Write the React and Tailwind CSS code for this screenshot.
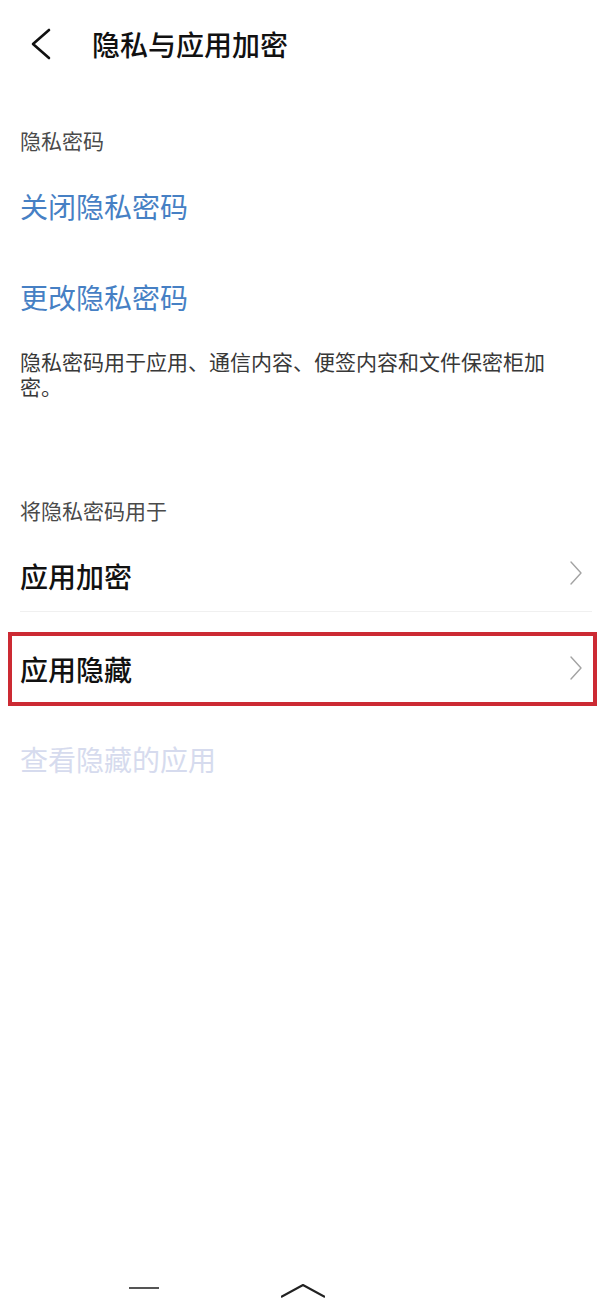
import React from "react";

const font = { fontFamily: '"Noto Sans CJK SC", "Noto Sans", sans-serif' };

const Chevron = () => (
  <svg width="14" height="24" viewBox="0 0 14 24" fill="none" className="shrink-0">
    <polyline points="2,1 12,12 2,23" stroke="#a3a3a3" strokeWidth="1.4" strokeLinejoin="round" strokeLinecap="round" />
  </svg>
);

export default function App() {
  return (
    <div className="min-h-[1298px] w-[612px] bg-white flex flex-col font-['Noto_Sans_CJK_SC',sans-serif]" style={font}>
      {/* header */}
      <div className="h-[88px] flex items-center">
        <svg width="22" height="32" viewBox="0 0 22 32" fill="none" className="ml-[30px]">
          <polyline points="19,2 3,16 19,30" stroke="#111" strokeWidth="2.6" strokeLinecap="round" strokeLinejoin="round" />
        </svg>
        <h1 className="ml-[40px] text-[28px] leading-[40px] font-medium text-[#111]">隐私与应用加密</h1>
      </div>

      {/* password section */}
      <div className="mt-[33px] h-[40px] flex items-center px-[20px] text-[21px] text-[#4a4a4a]">隐私密码</div>
      <div className="h-[90px] flex items-center px-[20px] text-[28px] text-[#4680c4]">关闭隐私密码</div>
      <div className="h-[92px] flex items-center px-[20px] text-[28px] text-[#4680c4]">更改隐私密码</div>
      <p className="mt-[6px] ml-[20px] w-[535px] text-[21px] leading-[25px] text-[#383838]">
        隐私密码用于应用、通信内容、便签内容和文件保密柜加密。
      </p>

      {/* usage section */}
      <div className="mt-[92px] h-[40px] flex items-center px-[20px] text-[21px] text-[#4a4a4a]">将隐私密码用于</div>
      <div className="h-[81px] pt-[10px] flex items-center justify-between mx-[20px] pr-[9px] border-b border-[#f0f0f0]">
        <span className="text-[28px] font-medium text-[#111]">应用加密</span>
        <span className="-mt-[6px]"><Chevron /></span>
      </div>
      <div className="mt-[20px] ml-[8px] w-[589px] h-[74px] border-4 border-[#cc2a33] flex items-center justify-between pl-[8px] pr-[10px]">
        <span className="text-[28px] font-medium text-[#111]">应用隐藏</span>
        <span className="-mt-[2px]"><Chevron /></span>
      </div>
      <div className="h-[106px] flex items-center px-[20px] text-[28px] text-[#d6dbee]">查看隐藏的应用</div>

      {/* system nav */}
      <div className="mt-auto h-[14px] flex items-start">
        <div className="ml-[129px] mt-[3px] w-[30px] h-[2px] bg-[#555]" />
        <svg width="44" height="14" viewBox="0 0 44 14" fill="none" className="ml-[122px]">
          <polyline points="0,13 22,1 44,13" stroke="#222" strokeWidth="2" strokeLinejoin="round" />
        </svg>
      </div>
    </div>
  );
}
